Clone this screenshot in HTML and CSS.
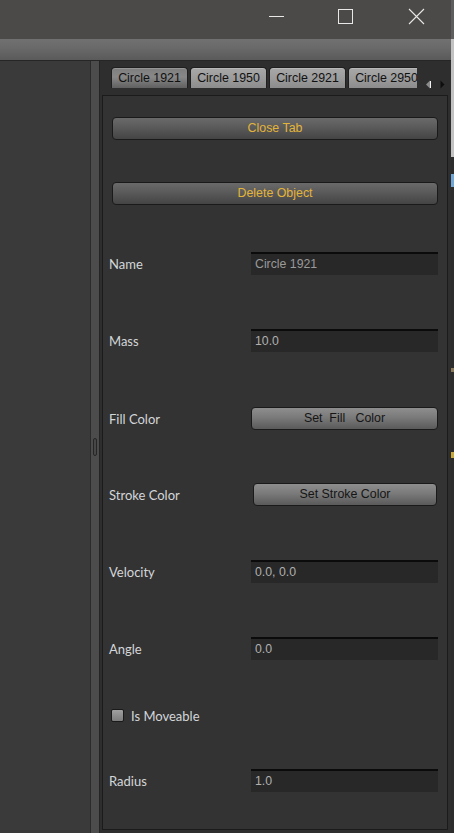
FILE: index.html
```html
<!DOCTYPE html>
<html>
<head>
<meta charset="utf-8">
<link rel="stylesheet" href="styles.css">
</head>
<body>
<div class="screen">
  <div class="window">
    <header class="titlebar">
      <div class="caption">
        <span class="cap-btn"><svg width="70" height="33" viewBox="0 0 70 33"><line x1="28" y1="16.5" x2="43" y2="16.5" stroke="#e8e8e8" stroke-width="1"/></svg></span>
        <span class="cap-btn"><svg width="70" height="33" viewBox="0 0 70 33"><rect x="27.5" y="9.5" width="14" height="14" fill="none" stroke="#e8e8e8" stroke-width="1"/></svg></span>
        <span class="cap-btn"><svg width="70" height="33" viewBox="0 0 70 33"><path d="M28 9 L43 24 M43 9 L28 24" stroke="#e8e8e8" stroke-width="1.1" fill="none"/></svg></span>
      </div>
    </header>
    <div class="menubar"></div>
    <div class="main">
      <div class="left-pane"></div>
      <div class="divider"><span class="grip"></span></div>
      <section class="tab-area">
        <div class="tabbar">
          <div class="tabs">
            <span class="tab selected">Circle 1921</span>
            <span class="tab">Circle 1950</span>
            <span class="tab">Circle 2921</span>
            <span class="tab">Circle 2950</span>
          </div>
          <div class="scroll-arrows">
            <svg width="6" height="9" viewBox="0 0 6 9"><path d="M4 0.5 L0 4.5 L4 8.5 Z" fill="#8c8c8c"/><line x1="4.5" y1="1" x2="4.5" y2="8" stroke="#f2f2f2" stroke-width="1"/></svg>
            <svg width="6" height="9" viewBox="0 0 6 9"><path d="M0.5 0.5 L4.5 4.5 L0.5 8.5 Z" fill="#0e0e0e"/></svg>
          </div>
        </div>
        <div class="content">
          <div class="row btn-row"><button class="btn gold">Close Tab</button></div>
          <div class="row btn-row gap-42"><button class="btn gold">Delete Object</button></div>
          <div class="row gap-47"><span class="label">Name</span><span class="field dim">Circle 1921</span></div>
          <div class="row"><span class="label">Mass</span><span class="field">10.0</span></div>
          <div class="row gap-55"><span class="label">Fill Color</span><button class="btn grey">Set  Fill   Color</button></div>
          <div class="row gap-53"><span class="label">Stroke Color</span><button class="btn grey stroke">Set Stroke Color</button></div>
          <div class="row"><span class="label">Velocity</span><span class="field">0.0, 0.0</span></div>
          <div class="row"><span class="label">Angle</span><span class="field">0.0</span></div>
          <div class="row check-row gap-44"><span class="checkbox"></span><span class="label">Is Moveable</span></div>
          <div class="row gap-42"><span class="label">Radius</span><span class="field">1.0</span></div>
        </div>
      </section>
    </div>
  </div>
  <div class="edge-strip"></div>
</div>
</body>
</html>
```
FILE: styles.css
```css
html, body {
  margin: 0;
  padding: 0;
}
body {
  width: 454px;
  height: 833px;
  overflow: hidden;
  background: #333333;
  font-family: "Liberation Sans", Arial, sans-serif;
  font-size: 12px;
}
.screen {
  display: flex;
  width: 454px;
  height: 833px;
}
.window {
  flex: 1;
  display: flex;
  flex-direction: column;
  min-width: 0;
}
.titlebar {
  height: 39px;
  flex: 0 0 39px;
  background: #4b4a48;
  display: flex;
  justify-content: flex-end;
}
.caption {
  display: flex;
}
.cap-btn {
  display: block;
  width: 70px;
  height: 33px;
}
.cap-btn svg {
  display: block;
}
.menubar {
  height: 21px;
  flex: 0 0 21px;
  background: linear-gradient(#717171, #6a6a6a 40%, #5a5a5a);
  border-bottom: 1px solid #262626;
}
.main {
  flex: 1;
  display: flex;
  min-height: 0;
}
.left-pane {
  width: 90px;
  flex: 0 0 90px;
  background: #3a3a3a;
}
.divider {
  width: 8px;
  flex: 0 0 8px;
  border-left: 1px solid #2b2b2b;
  border-right: 1px solid #242424;
  background: #4c4c4c;
  display: flex;
  align-items: center;
  justify-content: center;
}
.grip {
  display: block;
  width: 2px;
  height: 16px;
  border: 1px solid #262626;
  border-radius: 2px;
  background: #474747;
}
.tab-area {
  flex: 1;
  display: flex;
  flex-direction: column;
  background: #2e2e2e;
  padding: 6px 3px 3px 2px;
  min-width: 0;
}
.tabbar {
  display: flex;
  height: 21px;
  flex: 0 0 21px;
  padding-left: 9px;
}
.tabs {
  display: flex;
  gap: 2px;
  width: 306px;
  flex: 0 0 306px;
  overflow: hidden;
}
.tab {
  flex: 0 0 77px;
  box-sizing: border-box;
  height: 21px;
  border: 1px solid #1f1f1f;
  border-bottom: none;
  border-radius: 4px 4px 0 0;
  background: linear-gradient(#a8a8a8, #9c9c9c 50%, #8c8c8c);
  color: #111111;
  font-size: 12.4px;
  line-height: 20px;
  text-align: center;
  white-space: nowrap;
  overflow: hidden;
  box-shadow: inset 0 1px 0 #b8b8b8;
}
.tab.selected {
  background: linear-gradient(#7e7e7e, #888888 45%, #606060);
  box-shadow: inset 0 1px 0 #959595;
}
.scroll-arrows {
  flex: 1;
  display: flex;
  align-items: flex-end;
  gap: 8px;
  padding-left: 9px;
}
.scroll-arrows svg {
  display: block;
  transform: translateY(1px);
}
.content {
  flex: 1;
  margin-top: 7px;
  border: 1px solid #1b1b1b;
  background: #333333;
  display: flex;
  flex-direction: column;
  padding-top: 21px;
}
.row {
  display: flex;
  align-items: center;
  height: 23px;
  flex: 0 0 23px;
  padding: 0 9px 0 6px;
  margin-top: 54px;
}
.row:first-child {
  margin-top: 0;
}
.row.gap-42 { margin-top: 42px; }
.row.gap-44 { margin-top: 44px; }
.row.gap-47 { margin-top: 47px; }
.row.gap-53 { margin-top: 53px; }
.row.gap-55 { margin-top: 55px; }
.btn-row {
  padding-left: 9px;
}
.label {
  width: 142px;
  flex: 0 0 142px;
  font-family: Lato, "Open Sans", sans-serif;
  font-size: 13px;
  color: #d3d6d9;
  white-space: nowrap;
}
.field {
  flex: 1;
  box-sizing: border-box;
  height: 23px;
  border-top: 2px solid #0b0b0b;
  background: #282828;
  color: #b0b0b0;
  font-size: 12.3px;
  line-height: 21px;
  padding-left: 4px;
  white-space: nowrap;
}
.field.dim {
  color: #9a9a9a;
}
.btn {
  flex: 1;
  box-sizing: border-box;
  height: 23px;
  margin: 0;
  padding: 0;
  border: 1px solid #1a1a1a;
  border-radius: 4px;
  font-family: "Liberation Sans", Arial, sans-serif;
  font-size: 12.4px;
  line-height: 21px;
  text-align: center;
  white-space: pre;
}
.btn.gold {
  background: linear-gradient(#6a6a6a, #5a5a5a 45%, #444444);
  color: #e3b43a;
}
.btn.grey {
  background: linear-gradient(#8e8e8e, #7a7a7a 45%, #5a5a5a);
  color: #151515;
}
.btn.stroke {
  margin-left: 2px;
  margin-right: 1px;
}
.check-row {
  padding-left: 8px;
}
.check-row .label {
  width: auto;
  flex: 0 0 auto;
}
.checkbox {
  display: block;
  width: 11px;
  height: 11px;
  margin-right: 7px;
  border: 1px solid #1a1a1a;
  border-radius: 2px;
  background: linear-gradient(#a0a0a0, #7c7c7c);
}
.edge-strip {
  width: 3px;
  flex: 0 0 3px;
  background: linear-gradient(#5e5e5e 0, #5e5e5e 39px, #c2c2c2 39px, #c2c2c2 157px, #2c2c2c 157px, #2c2c2c 174px, #6fa6d6 174px, #6fa6d6 187px, #2c2c2c 187px, #2c2c2c 368px, #8a7a5a 368px, #8a7a5a 372px, #2c2c2c 372px, #2c2c2c 452px, #c8a838 452px, #c8a838 458px, #2c2c2c 458px);
}
```
